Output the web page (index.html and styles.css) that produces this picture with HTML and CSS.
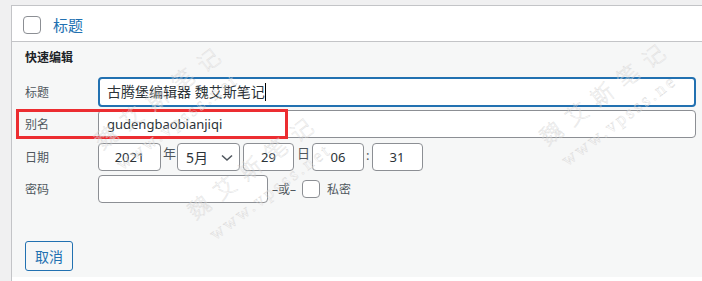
FILE: index.html
```html
<!DOCTYPE html>
<html lang="zh-CN">
<head>
  <meta charset="UTF-8">
  <title>快速编辑</title>
  <link rel="stylesheet" href="styles.css">
</head>
<body>
  <div class="list-table">
    <div class="row-head">
      <span class="checkbox"></span>
      <a class="row-title" href="#">标题</a>
    </div>

    <!-- Quick edit panel -->
    <div class="quick-edit">
      <h4 class="qe-title">快速编辑</h4>

      <div class="field">
        <span class="field-label">标题</span>
        <div class="text-input is-focus">古腾堡编辑器 魏艾斯笔记<span class="caret"></span></div>
      </div>

      <div class="field field-slug">
        <span class="field-label">别名</span>
        <div class="text-input latin">gudengbaobianjiqi</div>
      </div>

      <div class="field">
        <span class="field-label">日期</span>
        <div class="date-fields">
          <span class="box box-year">2021</span>
          <span class="sep sep-year">年</span>
          <span class="box box-month">5月
            <svg width="12" height="8" viewBox="0 0 12 8"><path d="M1 1.5 L6 6 L11 1.5" fill="none" stroke="#50575e" stroke-width="1.6"/></svg>
          </span>
          <span class="box box-day">29</span>
          <span class="sep sep-day">日</span>
          <span class="box box-hour">06</span>
          <span class="sep sep-colon">:</span>
          <span class="box box-min">31</span>
        </div>
      </div>

      <div class="field">
        <span class="field-label">密码</span>
        <div class="pwd-fields">
          <span class="box box-pwd"></span>
          <span class="or">–或–</span>
          <span class="checkbox"></span>
          <span class="private">私密</span>
        </div>
      </div>

      <div class="actions">
        <span class="button">取消</span>
      </div>
    </div>
  </div>

  <!-- annotation + watermark overlays -->
  <div class="highlight"></div>
  <div class="watermarks">
    <div class="wm wm-a"><div class="cn">魏艾斯笔记</div><div class="en">www.vpsss.net</div></div>
    <div class="wm wm-b"><div class="cn">魏艾斯笔记</div><div class="en">www.vpsss.net</div></div>
    <div class="wm wm-c"><div class="cn">魏艾斯笔记</div><div class="en">www.vpsss.ne</div></div>
  </div>
</body>
</html>
```

FILE: styles.css
```css
:root {
  --wp-blue: #2271b1;
  --wp-border: #c3c4c7;
  --input-border: #8c8f94;
  --text: #2c3338;
  --label: #50575e;
  --font: "Noto Sans", "Noto Sans CJK SC", sans-serif;
}

html, body {
  height: 100%;
}

body {
  margin: 0;
  background: #f0f0f1;
  font-family: var(--font);
  color: var(--text);
  overflow: hidden;
}

.list-table {
  box-sizing: border-box;
  height: 276px;
  margin: 5px 0 0 11px;
  border-top: 1px solid var(--wp-border);
  border-left: 1px solid var(--wp-border);
  background: #fff;
}

/* header row */
.row-head {
  display: flex;
  align-items: flex-start;
  height: 25px;
  padding: 10px 0 0 11px;
  border-bottom: 1px solid var(--wp-border);
}

.checkbox {
  box-sizing: border-box;
  width: 18px;
  height: 18px;
  border: 1px solid var(--input-border);
  border-radius: 4px;
  background: #fff;
  flex: none;
}

.row-title {
  margin-left: 12px;
  font-size: 15px;
  line-height: 18px;
  color: var(--wp-blue);
  text-decoration: none;
}

/* quick edit */
.quick-edit {
  background: #f6f7f7;
  padding: 7px 6px 6px 13px;
}

.qe-title {
  margin: 0 0 10px;
  font-size: 12px;
  line-height: 18px;
  font-weight: 700;
  color: #1d2327;
}

.field {
  display: flex;
  align-items: center;
  margin-bottom: 4px;
}

.field-slug {
  margin-top: -1px;
  margin-bottom: 5px;
}

.field-label {
  width: 73px;
  flex: none;
  font-size: 12px;
  color: var(--label);
}

.text-input {
  box-sizing: border-box;
  flex: 1;
  height: 28px;
  padding: 0 8px;
  border: 1px solid var(--input-border);
  border-radius: 4px;
  background: #fff;
  font-size: 14px;
  line-height: 26px;
  white-space: nowrap;
}

.text-input.latin {
  font-size: 13px;
}

.text-input.is-focus {
  height: 30px;
  border: 2px solid var(--wp-blue);
  padding: 0 7px;
  line-height: 26px;
}

.caret {
  display: inline-block;
  width: 1px;
  height: 18px;
  background: #000;
  vertical-align: -4px;
}

.date-fields,
.pwd-fields {
  display: flex;
  align-items: center;
}

.box {
  box-sizing: border-box;
  display: flex;
  align-items: center;
  justify-content: center;
  height: 28px;
  border: 1px solid var(--input-border);
  border-radius: 4px;
  background: #fff;
  font-size: 13px;
}

.box-year { width: 63px; }
.box-day { width: 51px; }
.box-hour { width: 52px; }
.box-min { width: 51px; }
.box-pwd { width: 170px; }

.box-month {
  width: 63px;
  justify-content: space-between;
  padding: 0 6px 0 8px;
  font-size: 14px;
}

.sep {
  font-size: 13px;
  color: var(--label);
  align-self: flex-start;
  line-height: 20px;
}

.sep-year { margin: 0 1px 0 2px; }
.sep-day { margin: 0 2px 0 3px; }
.sep-colon { margin: 0 2px 0 2px; line-height: 24px; }

.box-month svg { margin-top: 1px; }
.box-month + .box { margin-left: 3px; }

.or {
  margin: 0 6px 0 4px;
  font-size: 12px;
  color: var(--label);
}

.private {
  margin-left: 7px;
  font-size: 12px;
  color: var(--label);
}

.actions {
  margin-top: 38px;
}

.button {
  box-sizing: border-box;
  display: inline-flex;
  align-items: center;
  justify-content: center;
  width: 48px;
  height: 30px;
  border: 1px solid var(--wp-blue);
  border-radius: 3px;
  font-size: 14px;
  color: var(--wp-blue);
  background: #f6f7f7;
}

/* red annotation box over the slug row */
.highlight {
  position: absolute;
  left: 16px;
  top: 109px;
  width: 272px;
  height: 30px;
  box-sizing: border-box;
  border: 3px solid #ec2d31;
}

/* watermark */
.watermarks {
  position: absolute;
  inset: 0;
  pointer-events: none;
  overflow: hidden;
}

.wm {
  position: absolute;
  transform: rotate(-37deg);
  transform-origin: 0 0;
  white-space: nowrap;
  color: transparent;
  -webkit-text-stroke: 0.35px #d6d6d6;
}

.wm .cn {
  font-family: "Noto Sans CJK SC", sans-serif;
  font-weight: 300;
  font-size: 22px;
  line-height: 24px;
  letter-spacing: 10px;
}

.wm .en {
  margin: 10px 0 0 4px;
  font-family: "Liberation Serif", serif;
  font-size: 18px;
  line-height: 20px;
  letter-spacing: 3px;
}

.wm-a { left: 89px; top: 133px; }
.wm-b { left: 182px; top: 203px; }
.wm-c { left: 534px; top: 129px; }
```
